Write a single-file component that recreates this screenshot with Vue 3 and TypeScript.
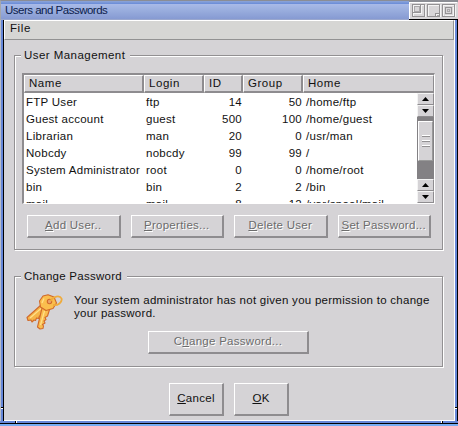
<script setup lang="ts">
interface User {
  name: string
  login: string
  id: number
  group: number
  home: string
}

const users: User[] = [
  { name: 'FTP User', login: 'ftp', id: 14, group: 50, home: '/home/ftp' },
  { name: 'Guest account', login: 'guest', id: 500, group: 100, home: '/home/guest' },
  { name: 'Librarian', login: 'man', id: 20, group: 0, home: '/usr/man' },
  { name: 'Nobcdy', login: 'nobcdy', id: 99, group: 99, home: '/' },
  { name: 'System Administrator', login: 'root', id: 0, group: 0, home: '/home/root' },
  { name: 'bin', login: 'bin', id: 2, group: 2, home: '/bin' },
  { name: 'mail', login: 'mail', id: 8, group: 12, home: '/var/spool/mail' },
]
const columns = ['Name', 'Login', 'ID', 'Group', 'Home']
const actions = [
  { key: 'A', rest: 'dd User..' },
  { key: 'P', rest: 'roperties...' },
  { key: 'D', rest: 'elete User' },
  { key: 'S', rest: 'et Password...' },
]
</script>

<template>
  <div class="desktop">
    <header class="titlebar">
      <span class="title">Users and Passwords</span>
      <svg class="controls" width="49" height="19" viewBox="0 0 49 19" shape-rendering="crispEdges">
        <rect width="49" height="19" fill="#d8d6d8" />
        <rect width="49" height="1" fill="#8b8d94" />
        <path d="M0.5 18V1.500H48" fill="none" stroke="#fff" />
        <path d="M0 18.500H49" stroke="#000" />
        <g fill="none" stroke="#f4f4f4">
          <path d="M4.500 16V4.500H16.500V16M19.500 16V4.500H31.500V16M34.500 16V4.500H46.500V16" />
          <path d="M4 12.500H12.500V4M27.500 15V13.500H31M38.500 11V8.500H41M36 14.500H44.500V6" />
        </g>
        <g fill="none" stroke="#949294">
          <path d="M3.500 15.500V3.500H15.500V15.500ZM18.500 15.500V3.500H30.500V15.500ZM33.500 15.500V3.500H45.500V15.500Z" />
          <path d="M4 11.500H11.500V4M26.500 15V12.500H30M36.500 6.500H42.500V12.500H36.500Z" />
        </g>
        <path d="M5.500 10V5.500H10M5 10.500H10.500V5M28 14.500H30M38.500 8.500H40.500V10.500H38.500Z" fill="none" stroke="#aaa8aa" />
      </svg>
    </header>

    <div class="frame">
      <div class="edge left"></div>
      <main class="window">
        <nav class="menubar"><span>File</span></nav>

        <section class="group users">
          <h2 class="legend wide">User Management</h2>
          <div class="table">
            <div class="row head">
              <span v-for="c in columns" :key="c" class="th">{{ c }}</span>
            </div>
            <div class="body">
              <div class="rows">
                <div v-for="u in users" :key="u.login" class="row">
                  <span class="td">{{ u.name }}</span>
                  <span class="td">{{ u.login }}</span>
                  <span class="td num">{{ u.id }}</span>
                  <span class="td num">{{ u.group }}</span>
                  <span class="td home">{{ u.home }}</span>
                </div>
              </div>
              <div class="scroll">
                <div class="arrow"><svg width="7" height="4" viewBox="0 0 7 4"><path d="M0 4L3.500 0L7 4Z" /></svg></div>
                <div class="arrow"><svg width="7" height="4" viewBox="0 0 7 4"><path d="M0 0L3.500 4L7 0Z" /></svg></div>
                <div class="track"><div class="thumb"><i></i><i></i><i></i></div></div>
                <div class="arrow"><svg width="7" height="4" viewBox="0 0 7 4"><path d="M0 4L3.500 0L7 4Z" /></svg></div>
                <div class="arrow"><svg width="7" height="4" viewBox="0 0 7 4"><path d="M0 0L3.500 4L7 0Z" /></svg></div>
              </div>
            </div>
          </div>
          <div class="actions">
            <button v-for="a in actions" :key="a.key" class="btn" disabled><span><u>{{ a.key }}</u>{{ a.rest }}</span></button>
          </div>
        </section>

        <section class="group password">
          <h2 class="legend">Change Password</h2>
          <div class="notice">
            <svg class="keys" width="37" height="36" viewBox="0 0 37 36">
              <g stroke="#d0692b" stroke-width="1.100" stroke-linejoin="round">
                <path d="M15 11L1 23.500L2 26.500L5 26L6 28L8 26L9.500 26.500L10.500 24L12.500 24.500L13.500 22L15.500 22.500L21 16Z" fill="#f6b548" />
                <path d="M16 14L11.500 33L14 35L17 34.500L17.500 32L16.500 30.500L19 29L18 27L20 25.500L19 23.500L21.500 22L24 14Z" fill="#f9bd4f" />
                <path d="M17 2L22 0.800L28 3L30.500 9L27 14.500L20 16.500L14.500 13L13.500 7Z" fill="#fabe4e" />
                <circle cx="23.500" cy="7.500" r="2.200" fill="#e9a26a" />
              </g>
              <path d="M4 24L15 14.500M14.500 31L18.500 17M16 9L18 4.500" fill="none" stroke="#ffe08a" stroke-width="1.200" />
              <path d="M24.500 7C27 2 34 1 35.500 4.500C36.500 8 32 12 27 11" fill="none" stroke="#efab3c" stroke-width="1.800" />
            </svg>
            <p>Your system administrator has not given you permission to change<br />your password.</p>
          </div>
          <button class="btn change" disabled><span>C<u>h</u>ange Password...</span></button>
        </section>

        <footer class="footer">
          <button class="btn big"><span><u>C</u>ancel</span></button>
          <button class="btn big"><span><u>O</u>K</span></button>
        </footer>
      </main>
      <div class="edge right"></div>
    </div>
    <div class="bottom"><i></i><i></i></div>
  </div>
</template>

<style>
body {
  margin: 0;
  overflow: hidden;
}
</style>

<style scoped>
* {
  box-sizing: border-box;
}
.desktop {
  width: 458px;
  height: 426px;
  background: #78adf2;
  font: 11.5px/13px "Liberation Sans", Arial, sans-serif;
  letter-spacing: 0.27px;
  color: #111;
  display: flex;
  flex-direction: column;
}
.titlebar {
  height: 20px;
  border-top: 1px solid #8b8d94;
  border-left: 1px solid #a5a7ac;
  background: linear-gradient(#86a0d8 0, #86a0d8 1px, #6e8fd8 2px, #6e8fd8 3px, #a9bae8 3px, #9aaede 9px, #869ad2 18px, #aeb4c8 19px);
  display: flex;
  justify-content: space-between;
  padding-left: 4px;
}
.title {
  color: #0c1c4c;
  line-height: 19px;
  letter-spacing: -0.5px;
}
.controls {
  flex: none;
}
.frame {
  display: flex;
  height: 401px;
}
.edge {
  background: linear-gradient(#6687d8 387px, #000 387px, #000 388px, #fff 388px, #fff 389px, #6687d8 389px);
}
.left {
  width: 4px;
  border-left: 1px solid #b9bdc8;
  border-right: 1px solid #000;
}
.right {
  width: 3px;
  border-right: 1px solid #000;
}
.window {
  flex: 1;
  background: #d5d3d6;
  border-right: 1px solid #fff;
  border-bottom: 1px solid #fff;
}
.menubar {
  height: 20px;
  background: #d6d6d4;
  border: 1px solid #fff;
  border-right-color: #929292;
  border-bottom-color: #929292;
  padding: 1px 5px;
  letter-spacing: 0.6px;
}
.group {
  position: relative;
  margin: 0 11px 0 10px;
  border: 1px solid #929092;
  box-shadow: 1px 1px 0 #fff, inset 1px 1px 0 #fff;
}
.users {
  height: 195px;
  margin-top: 15px;
  padding: 17px 7px 0;
}
.password {
  height: 91px;
  margin-top: 26px;
  padding: 17px 10px 0 11px;
}
.legend {
  position: absolute;
  left: 6px;
  top: -7px;
  margin: 0;
  padding: 0 5px 0 3px;
  background: #d5d3d6;
  font: inherit;
}
.legend.wide {
  letter-spacing: 0.45px;
}
.table {
  height: 131px;
  border: 2px solid #8e8c8f;
  border-right: 1px solid #fff;
  border-bottom: 1px solid #fff;
  background: #fff;
}
.row {
  display: grid;
  grid-template-columns: 120px 60px 39px 60px 1fr;
  height: 17px;
}
.head {
  height: 18px;
  background: #d5d3d6;
  letter-spacing: 0.55px;
}
.th {
  border: 1px solid #fff;
  border-right: 2px solid #8e8c8f;
  border-bottom: 2px solid #8e8c8f;
  padding: 1px 0 0 4px;
}
.th:last-child {
  border-right-width: 1px;
}
.body {
  display: flex;
  height: 110px;
  overflow: hidden;
}
.rows {
  flex: 1;
}
.td {
  line-height: 18px;
  padding-left: 2px;
  white-space: nowrap;
}
.num {
  text-align: right;
  padding: 0 1px 0 0;
}
.home {
  padding-left: 3px;
}
.scroll {
  width: 17px;
  display: flex;
  flex-direction: column;
}
.arrow {
  height: 12px;
  flex: none;
  background: #d5d3d6;
  border: 1px solid #f4f4f4;
  border-right-color: #8e8c8f;
  border-bottom-color: #8e8c8f;
  display: flex;
  align-items: center;
  justify-content: center;
}
.arrow svg {
  display: block;
}
.track {
  flex: 1;
  background: #838184;
  padding: 4px 1px 0;
}
.thumb {
  height: 40px;
  background: #d5d3d6;
  border: 1px solid #fff;
  border-right-color: #999;
  border-bottom-color: #999;
  display: flex;
  flex-direction: column;
  align-items: center;
  justify-content: center;
  gap: 3px;
}
.thumb i {
  width: 8px;
  height: 2px;
  border-top: 1px solid #fff;
  border-bottom: 1px solid #929092;
}
.actions {
  display: flex;
  gap: 10px;
  margin: 11px 0 0 5px;
}
.btn {
  display: block;
  width: 93.5px;
  height: 23px;
  padding: 0;
  font: inherit;
  letter-spacing: inherit;
  color: #111;
  background: #d5d3d6;
  border: 1px solid #fff;
  border-right: 2px solid #8e8c8f;
  border-bottom: 2px solid #8e8c8f;
  border-radius: 0;
  text-align: center;
  white-space: nowrap;
}
.btn span {
  display: block;
  padding-bottom: 2px;
}
.btn:disabled {
  color: #6c6c6c;
  text-shadow: 1px 1px 0 #fff;
}
.btn u {
  text-underline-offset: 1px;
}
.notice {
  display: flex;
  gap: 11px;
  height: 37px;
}
.notice p {
  margin: 0;
  white-space: nowrap;
}
.keys {
  flex: none;
}
.change {
  width: 161px;
  margin-left: 122px;
}
.footer {
  display: flex;
  gap: 10px;
  margin: 16px 0 0 165px;
}
.btn.big {
  width: 55px;
  height: 33px;
}
.big span {
  padding: 0;
  position: relative;
  top: -1px;
}
.bottom {
  height: 3px;
  background: #6687d8;
  border-bottom: 1px solid #000;
  display: flex;
  justify-content: space-between;
  padding: 0 15px;
}
.bottom i {
  width: 2px;
  border-left: 1px solid #000;
  border-right: 1px solid #fff;
}
.bottom i:last-child {
  border-left-color: #fff;
  border-right-color: #000;
}
</style>
